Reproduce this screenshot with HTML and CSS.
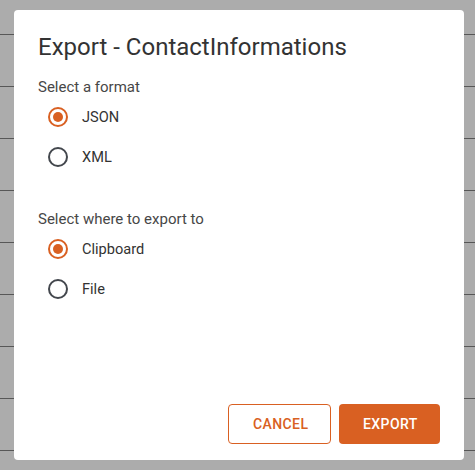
FILE: index.html
```html
<!DOCTYPE html>
<html lang="en">
<head>
<meta charset="utf-8">
<title>Export - ContactInformations</title>
<link rel="stylesheet" href="styles.css">
</head>
<body>
<div class="backdrop">
  <div class="dialog" role="dialog" aria-labelledby="dlg-title">
    <h2 class="dialog-title" id="dlg-title">Export - ContactInformations</h2>
    <div class="dialog-content">
      <div class="group">
        <div class="group-label">Select a format</div>
        <label class="radio checked"><span class="radio-icon"></span><span class="radio-text">JSON</span></label>
        <label class="radio"><span class="radio-icon"></span><span class="radio-text">XML</span></label>
      </div>
      <div class="group group-second">
        <div class="group-label">Select where to export to</div>
        <label class="radio checked"><span class="radio-icon"></span><span class="radio-text">Clipboard</span></label>
        <label class="radio"><span class="radio-icon"></span><span class="radio-text">File</span></label>
      </div>
    </div>
    <div class="dialog-actions">
      <button class="btn btn-outlined">CANCEL</button>
      <button class="btn btn-contained">EXPORT</button>
    </div>
  </div>
</div>
</body>
</html>
```
FILE: styles.css
```css
html, body {
  margin: 0;
  padding: 0;
  height: 100%;
}
body {
  font-family: Roboto, "Noto Sans", "Liberation Sans", sans-serif;
  background-color: #acacac;
  background-image: repeating-linear-gradient(
    to bottom,
    transparent 0px,
    transparent 33px,
    #575757 33px,
    #575757 34px,
    transparent 34px,
    transparent 52px
  );
  background-position: 0 1px;
}
.backdrop {
  position: fixed;
  inset: 0;
  padding: 10px 0 0 14px;
}
.dialog {
  width: 450px;
  height: 450px;
  box-sizing: border-box;
  background: #ffffff;
  border-radius: 4px;
  display: flex;
  flex-direction: column;
  padding: 21px 24px 16px 24px;
}
.dialog-title {
  margin: 0;
  font-size: 24px;
  line-height: 32px;
  font-weight: 400;
  color: #333333;
}
.dialog-content {
  padding-top: 14px;
}
.group-label {
  font-size: 15px;
  line-height: 20px;
  color: #474747;
}
.group-second {
  margin-top: 32px;
}
.radio {
  display: flex;
  align-items: center;
  height: 40px;
  cursor: pointer;
}
.radio-icon {
  width: 20px;
  height: 20px;
  box-sizing: border-box;
  border: 2px solid #43474d;
  border-radius: 50%;
  margin-left: 10px;
  position: relative;
  flex: none;
}
.radio.checked .radio-icon {
  border-color: #d96022;
}
.radio.checked .radio-icon::after {
  content: "";
  position: absolute;
  left: 3px;
  top: 3px;
  width: 10px;
  height: 10px;
  border-radius: 50%;
  background: #d96022;
}
.radio-text {
  margin-left: 14px;
  font-size: 14.6px;
  color: #333333;
}
.dialog-actions {
  margin-top: auto;
  display: flex;
  justify-content: flex-end;
  gap: 8px;
}
.btn {
  height: 40px;
  box-sizing: border-box;
  border-radius: 4px;
  font-family: Roboto, "Noto Sans", "Liberation Sans", sans-serif;
  font-size: 14px;
  font-weight: 500;
  letter-spacing: 0.4px;
  padding: 0 24px;
  cursor: pointer;
}
.btn-outlined {
  background: #ffffff;
  border: 1px solid #d96022;
  color: #d96022;
  width: 103px;
}
.btn-contained {
  background: #d96022;
  border: none;
  color: #ffffff;
  width: 101px;
}
```
